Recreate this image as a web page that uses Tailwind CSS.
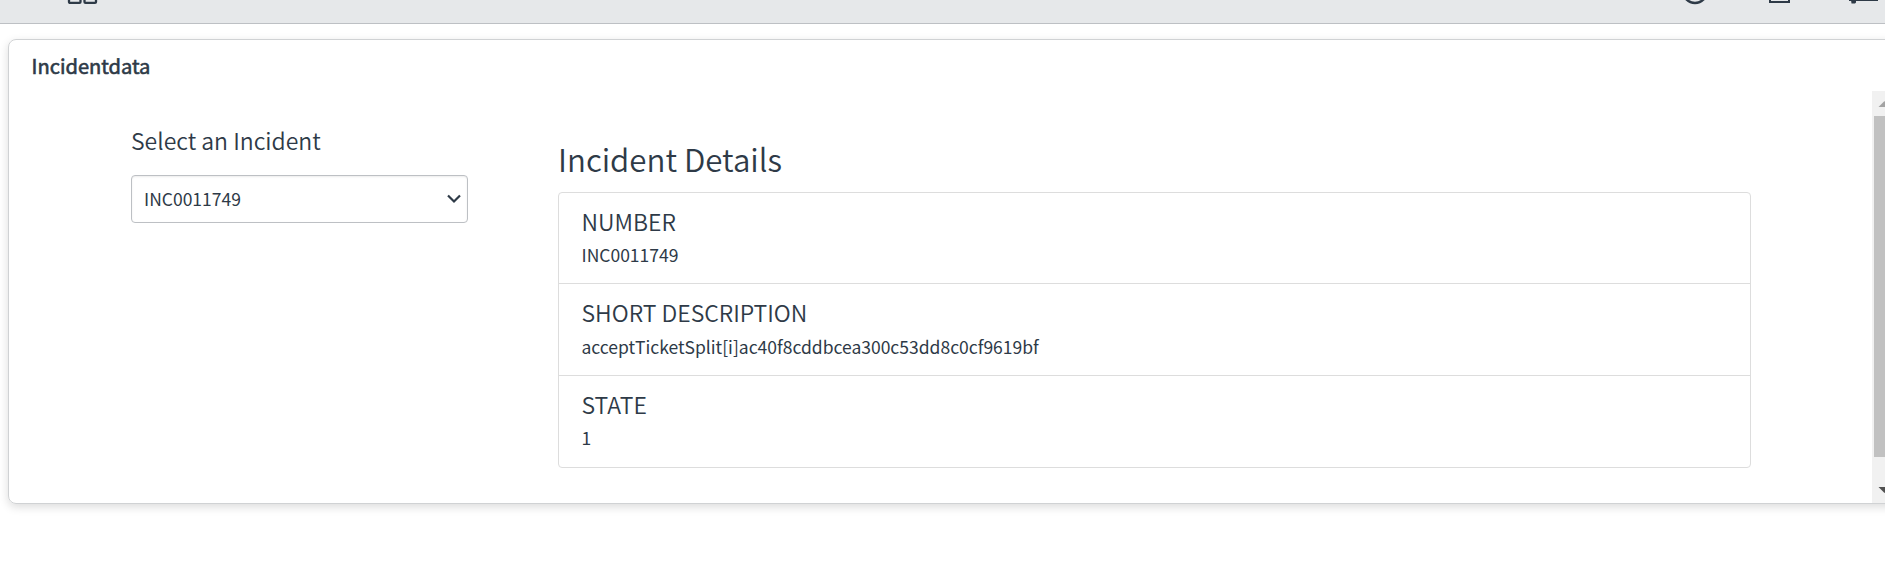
<!DOCTYPE html>
<html lang="en">
<head>
  <meta charset="utf-8">
  <title>Incidentdata</title>
  <script src="https://cdn.jsdelivr.net/npm/@tailwindcss/browser@4"></script>
</head>
<body class="h-screen overflow-hidden bg-white font-['Noto_Sans_CJK_SC',sans-serif] text-[#2e3a47]">
  <!-- Toolbar, scrolled almost out of view -->
  <header class="flex h-6 items-start justify-between border-b border-[#bdc0c4] bg-[#e6e8ea] pr-0 pl-[67px]">
    <svg class="h-5 w-8" viewBox="0 0 32 20" fill="none" stroke="currentColor" stroke-width="2.300">
      <rect x="2" y="-9" width="11.500" height="11.900" rx="1" />
      <rect x="17.500" y="-9" width="11.500" height="11.900" rx="1" />
    </svg>
    <svg class="h-5 w-[240px]" viewBox="0 0 240 20" fill="none" stroke="currentColor" stroke-width="2">
      <circle cx="50" cy="-9" r="12" stroke-width="2.500" />
      <rect x="125" y="-16" width="19" height="18" />
      <path d="M204 0h29" />
      <path d="M206 0h5v2.500l-1 1h-3.500z" fill="currentColor" stroke="none" />
    </svg>
  </header>

  <div class="mt-[15px] ml-2 h-[465px] w-[1900px] rounded-lg border border-[#d0d2d4] shadow-[0_3px_10px_rgba(0,0,0,0.14)]">
    <h2 class="h-[51px] pt-[11px] pl-[22.5px] text-[20.1px] leading-[30px] [-webkit-text-stroke:0.6px]">Incidentdata</h2>
    <div class="flex h-[412px]">
      <div class="flex h-full w-[1863px] pl-[122px]">
        <div class="w-[337px] pt-[35px]">
          <label class="block text-[23px] leading-[28px] font-[350]" for="incident">Select an Incident</label>
          <div class="relative mt-[21px]">
            <select id="incident" class="block h-12 w-full appearance-none rounded border border-[#bdc0c4] bg-white px-3 text-[17.5px] shadow-[inset_0_1px_2px_rgba(0,0,0,0.08)]">
              <option>INC0011749</option>
            </select>
            <svg class="pointer-events-none absolute top-[19px] right-[7px] h-[10px] w-[14px]" viewBox="0 0 14 10" fill="none" stroke="currentColor" stroke-width="2.200">
              <path d="M1 1.500L7 7.500L13 1.500" />
            </svg>
          </div>
        </div>

        <div class="ml-[90px] w-[1193px] pt-[51px]">
          <h3 class="text-[31.25px] leading-[34px] font-[350]">Incident Details</h3>
          <ul class="mt-4 rounded border border-[#dddddd]">
            <li class="h-[91px] border-b border-[#dddddd] px-[22.5px] pt-4">
              <h4 class="text-[23px] leading-[25px] font-[350]">NUMBER</h4>
              <p class="mt-2 text-[17.5px] leading-[25px]">INC0011749</p>
            </li>
            <li class="h-[92px] border-b border-[#dddddd] px-[22.5px] pt-4">
              <h4 class="text-[23px] leading-[25px] font-[350]">SHORT DESCRIPTION</h4>
              <p class="mt-[9px] text-[17.5px] leading-[25px]">acceptTicketSplit[i]ac40f8cddbcea300c53dd8c0cf9619bf</p>
            </li>
            <li class="h-[91px] px-[22.5px] pt-4">
              <h4 class="text-[23px] leading-[25px] font-[350]">STATE</h4>
              <p class="mt-2 text-[17.5px] leading-[25px]">1</p>
            </li>
          </ul>
        </div>
      </div>

      <!-- Scrollbar -->
      <div class="flex w-[25px] flex-col bg-[#f1f1f1]">
        <svg class="h-[25px] w-[25px] text-[#a3a3a3]" viewBox="0 0 25 25" fill="currentColor"><path d="M6.500 16L12.500 10L18.500 16z" /></svg>
        <div class="mx-0.5 h-[341px] bg-[#c1c1c1]"></div>
        <svg class="mt-auto h-[25px] w-[25px] text-[#505050]" viewBox="0 0 25 25" fill="currentColor"><path d="M6.500 9L12.500 15L18.500 9z" /></svg>
      </div>
    </div>
  </div>
</body>
</html>
